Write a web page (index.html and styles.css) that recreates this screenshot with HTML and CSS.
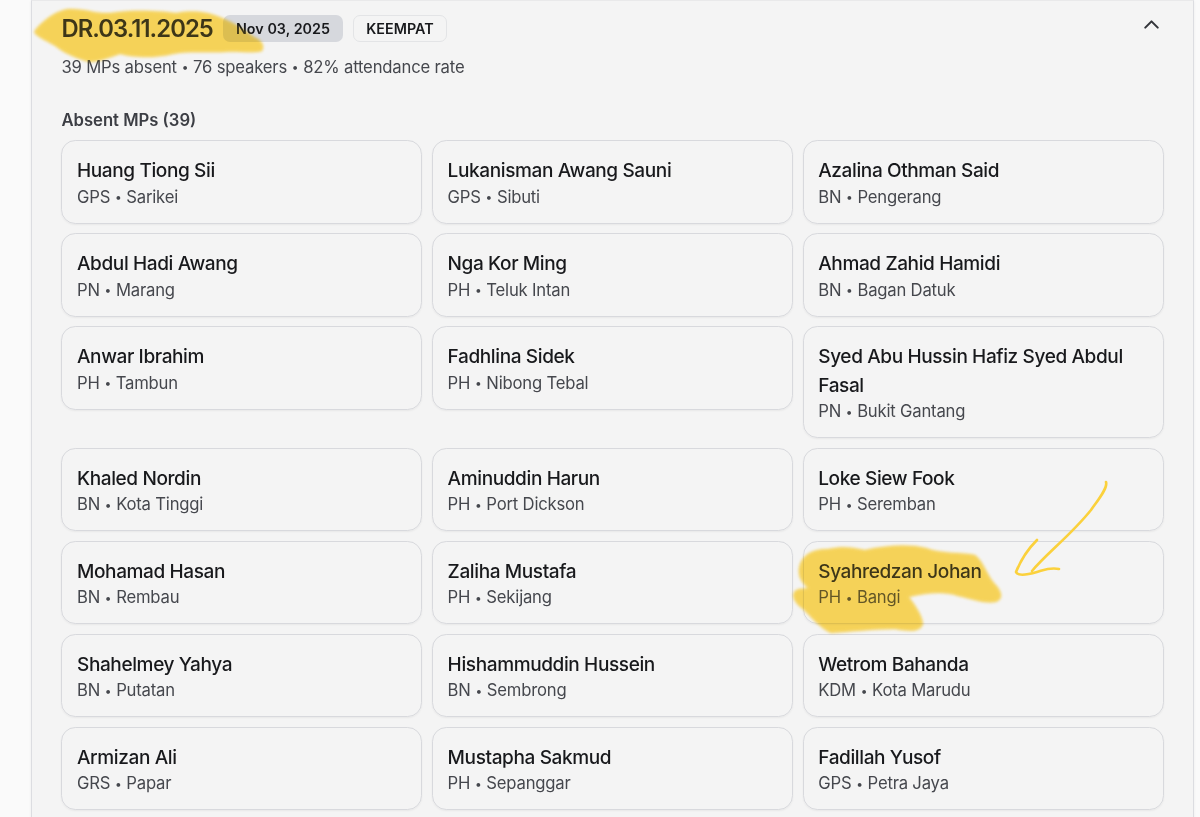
FILE: index.html
```html
<!DOCTYPE html>
<html lang="en">
<head>
<meta charset="utf-8">
<title>DR.03.11.2025</title>
<link rel="stylesheet" href="styles.css">
</head>
<body>
<main class="panel">
  <header class="head">
    <div class="title-row">
      <h1 class="title">DR.03.11.2025</h1>
      <span class="badge badge-date">Nov 03, 2025</span>
      <span class="badge badge-session">KEEMPAT</span>
      <svg class="chevron" viewBox="0 0 24 24"><path d="m18 15-6-6-6 6"/></svg>
    </div>
    <p class="summary">39 MPs absent <i class="dot">•</i> 76 speakers <i class="dot">•</i> 82% attendance rate</p>
  </header>
  <h2 class="subhead">Absent MPs (39)</h2>
  <section class="grid">
    <article class="card"><h3 class="name">Huang Tiong Sii</h3><p class="seat">GPS <i class="dot">•</i> Sarikei</p></article>
    <article class="card"><h3 class="name">Lukanisman Awang Sauni</h3><p class="seat">GPS <i class="dot">•</i> Sibuti</p></article>
    <article class="card"><h3 class="name">Azalina Othman Said</h3><p class="seat">BN <i class="dot">•</i> Pengerang</p></article>
    <article class="card"><h3 class="name">Abdul Hadi Awang</h3><p class="seat">PN <i class="dot">•</i> Marang</p></article>
    <article class="card"><h3 class="name">Nga Kor Ming</h3><p class="seat">PH <i class="dot">•</i> Teluk Intan</p></article>
    <article class="card"><h3 class="name">Ahmad Zahid Hamidi</h3><p class="seat">BN <i class="dot">•</i> Bagan Datuk</p></article>
    <article class="card"><h3 class="name">Anwar Ibrahim</h3><p class="seat">PH <i class="dot">•</i> Tambun</p></article>
    <article class="card"><h3 class="name">Fadhlina Sidek</h3><p class="seat">PH <i class="dot">•</i> Nibong Tebal</p></article>
    <article class="card"><h3 class="name">Syed Abu Hussin Hafiz Syed Abdul Fasal</h3><p class="seat">PN <i class="dot">•</i> Bukit Gantang</p></article>
    <article class="card"><h3 class="name">Khaled Nordin</h3><p class="seat">BN <i class="dot">•</i> Kota Tinggi</p></article>
    <article class="card"><h3 class="name">Aminuddin Harun</h3><p class="seat">PH <i class="dot">•</i> Port Dickson</p></article>
    <article class="card"><h3 class="name">Loke Siew Fook</h3><p class="seat">PH <i class="dot">•</i> Seremban</p></article>
    <article class="card"><h3 class="name">Mohamad Hasan</h3><p class="seat">BN <i class="dot">•</i> Rembau</p></article>
    <article class="card"><h3 class="name">Zaliha Mustafa</h3><p class="seat">PH <i class="dot">•</i> Sekijang</p></article>
    <article class="card"><h3 class="name">Syahredzan Johan</h3><p class="seat">PH <i class="dot">•</i> Bangi</p></article>
    <article class="card"><h3 class="name">Shahelmey Yahya</h3><p class="seat">BN <i class="dot">•</i> Putatan</p></article>
    <article class="card"><h3 class="name">Hishammuddin Hussein</h3><p class="seat">BN <i class="dot">•</i> Sembrong</p></article>
    <article class="card"><h3 class="name">Wetrom Bahanda</h3><p class="seat">KDM <i class="dot">•</i> Kota Marudu</p></article>
    <article class="card"><h3 class="name">Armizan Ali</h3><p class="seat">GRS <i class="dot">•</i> Papar</p></article>
    <article class="card"><h3 class="name">Mustapha Sakmud</h3><p class="seat">PH <i class="dot">•</i> Sepanggar</p></article>
    <article class="card"><h3 class="name">Fadillah Yusof</h3><p class="seat">GPS <i class="dot">•</i> Petra Jaya</p></article>
  </section>
</main>
<svg class="ink marker" viewBox="0 0 1200 817">
  <g id="marker-shape" class="marker-shape">
    <path d="M34 32C39 24 54 11 68 9C84 8 96 14 110 13C135 9 160 11 177 13C192 10 207 12 217 16C231 21 242 28 254 37C262 40 265 46 262 51C252 54 239 51 225 52C203 53 190 51 173 54C152 59 132 57 120 54C108 58 99 62 89 62C76 58 66 54 58 48C49 41 37 38 34 32Z"/>
    <path d="M799 568C801 556 811 549 828 549C842 546 851 547 865 550C887 545 910 544 926 548C942 554 960 552 975 555C983 561 986 573 994 583C1002 591 1004 599 996 602C982 604 969 598 958 596C943 591 928 593 909 597C914 604 922 614 923 624C920 633 908 631 895 629C872 629 849 632 831 633C820 628 812 618 803 609C793 602 789 592 799 589L808 588C801 582 798 576 799 568Z"/>
  </g>
</svg>
<svg class="ink marker-film" viewBox="0 0 1200 817"><use href="#marker-shape"/></svg>
<svg class="ink pen" viewBox="0 0 1200 817">
  <path d="M1106 482C1108 488 1098 500 1091 510C1071 535 1046 554 1032 571"/>
  <path d="M1037 540C1026 551 1020 562 1016 572C1018 577 1030 574 1037 572C1044 570 1050 567 1059 569"/>
</svg>
</body>
</html>
```
FILE: styles.css
```css
* { box-sizing: border-box; }
body {
  margin: 0;
  height: 817px;
  overflow: hidden;
  background: #fafafa;
  font-family: Inter, "Liberation Sans", sans-serif;
  color: #18191c;
}
h1, h2, h3, p { margin: 0; }
.panel {
  width: 1163px;
  height: 840px;
  margin-left: 31px;
  padding: 13px 29.4px 0 29.4px;
  background: #f4f4f4;
  border: 1px solid #dcdde1;
  border-top-color: #e9e9ea;
  box-shadow: 0 1px 3px rgba(0, 0, 0, .06);
}
.title-row { display: flex; align-items: center; height: 29px; }
.title { font-size: 23.8px; line-height: 29px; font-weight: 600; letter-spacing: -.92px; width: 161.6px; white-space: nowrap; }
.badge {
  height: 27px;
  display: flex;
  align-items: center;
  justify-content: center;
  font-size: 14.3px;
  font-weight: 600;
  letter-spacing: .04px;
  border-radius: 7px;
  white-space: nowrap;
}
.badge-date { width: 120px; background: #d6d8dd; }
.badge-session { width: 94px; margin-left: 10px; border: 1px solid #e3e4e6; }
.chevron {
  width: 25px;
  height: 25px;
  margin-left: auto;
  position: relative;
  top: -4.5px;
  fill: none;
  stroke: #33353a;
  stroke-width: 2;
  stroke-linecap: round;
  stroke-linejoin: round;
}
.dot { font-style: normal; font-size: 12px; line-height: 1; vertical-align: 1.6px; margin: 0 .3px; }
.summary { margin-top: 12px; font-size: 16.67px; line-height: 24px; letter-spacing: -.18px; color: #45474d; }
.subhead { margin-top: 28.6px; font-size: 16.67px; line-height: 24px; font-weight: 600; color: #3c3e44; }
.grid {
  display: grid;
  grid-template-columns: repeat(3, 1fr);
  gap: 9.7px;
  margin-top: 8.8px;
  align-items: start;
}
.card {
  padding: 15.8px 14.6px 13px;
  border: 1px solid #d8d9dd;
  border-radius: 14.3px;
  box-shadow: 0 1px 2px rgba(0, 0, 0, .05);
}
.name { font-size: 19.05px; line-height: 28.6px; font-weight: 500; letter-spacing: -.39px; }
.seat { font-size: 16.67px; line-height: 23.9px; letter-spacing: -.2px; color: #45474d; }
.ink {
  position: absolute;
  left: 0;
  top: 0;
  width: 1200px;
  height: 817px;
  pointer-events: none;
}
.marker { mix-blend-mode: multiply; }
.marker-film { opacity: .16; }
.marker-shape { fill: #ffdb5c; filter: blur(1.8px); }
.pen { fill: none; stroke: #fbd13c; stroke-width: 2.6; stroke-linecap: round; stroke-linejoin: round; }
```
